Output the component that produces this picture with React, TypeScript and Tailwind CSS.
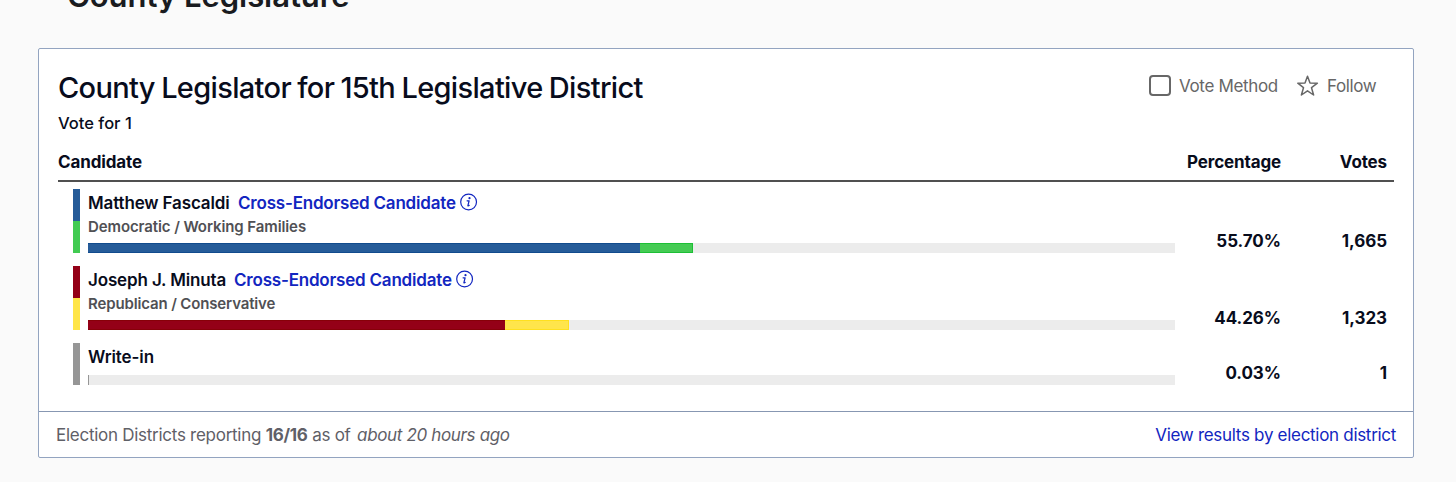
import React from 'react';
import { clsx } from 'clsx';

type Segment = { className: string; width: number };

type Candidate = {
  name: string;
  nameClass: string;
  parties?: string;
  partiesClass?: string;
  percentage: string;
  votes: string;
  stripes: string[];
  segments: Segment[];
};

// segment widths are percentages of the full bar
const candidates: Candidate[] = [
  {
    name: 'Matthew Fascaldi',
    nameClass: 'w-[141px] tracking-[-0.14px]',
    parties: 'Democratic / Working Families',
    partiesClass: 'tracking-[-0.1px]',
    percentage: '55.70%',
    votes: '1,665',
    stripes: ['bg-[#265c99]', 'bg-[#41cb52]'],
    segments: [
      { className: 'bg-[#265c99] border-y border-[#114b8d]', width: 50.78 },
      { className: 'bg-[#45cb54] border border-l-0 border-[#1dbf36]', width: 4.92 },
    ],
  },
  {
    name: 'Joseph J. Minuta',
    nameClass: 'w-[137px] tracking-[-0.14px]',
    parties: 'Republican / Conservative',
    partiesClass: 'tracking-[-0.14px]',
    percentage: '44.26%',
    votes: '1,323',
    stripes: ['bg-[#940017]', 'bg-[#ffe548]'],
    segments: [
      { className: 'bg-[#940017] border-y border-[#870008]', width: 38.32 },
      { className: 'bg-[#ffe54b] border border-l-0 border-[#ffe01f]', width: 5.94 },
    ],
  },
  {
    name: 'Write-in',
    nameClass: 'tracking-[-0.1px]',
    percentage: '0.03%',
    votes: '1',
    stripes: ['bg-[#969696]'],
    segments: [{ className: 'bg-[#969696]', width: 0.07 }],
  },
];

const InfoIcon: React.FC = () => (
  <svg width="18" height="18" viewBox="0 0 18 18" fill="none" className="shrink-0 -mt-px">
    <circle cx="8.6" cy="9" r="7.9" stroke="#1226c0" strokeWidth="1.2" />
    <circle cx="9.5" cy="5.2" r="1.1" fill="#1226c0" />
    <path d="M7.1 7.8h2L7.9 12.6c-.1.5.5.5 1.3-.2" stroke="#1226c0" strokeWidth="1.25" strokeLinecap="round" strokeLinejoin="round" />
  </svg>
);

const StarIcon: React.FC = () => (
  <svg width="22" height="22" viewBox="0 0 22 22" fill="none" className="shrink-0">
    <path
      d="M10.5 1.2L13 8L20.4 8.2L14.5 12.7L16.6 20L10.5 15.8L4.4 20L6.5 12.7L0.8 8.2L8 8Z"
      stroke="#676767"
      strokeWidth="1.5"
      strokeLinejoin="round"
    />
  </svg>
);

const CandidateRow: React.FC<{ candidate: Candidate }> = ({ candidate }) => (
  <div className={clsx('flex', candidate.parties ? 'h-16' : 'h-[42px]')}>
    {/* Party stripe */}
    <div className="ml-[15px] w-[7px] flex flex-col shrink-0">
      {candidate.stripes.map(color => (
        <div key={color} className={clsx('flex-1', color)} />
      ))}
    </div>
    <div className="ml-2 w-[1087px] flex flex-col shrink-0">
      <div className="flex items-center h-[26px] pt-px text-[17px] leading-[24px] font-semibold whitespace-nowrap">
        <span className={candidate.nameClass}>{candidate.name}</span>
        {candidate.parties && (
          <a href="#" className="ml-[9px] flex items-center gap-1 text-[#1226c0]">
            <span className="w-[218px] tracking-[-0.2px]">Cross-Endorsed Candidate</span>
            <InfoIcon />
          </a>
        )}
      </div>
      {candidate.parties && (
        <div className={clsx('h-6 leading-[24px] text-[15px] font-semibold text-[#505054] whitespace-nowrap', candidate.partiesClass)}>
          {candidate.parties}
        </div>
      )}
      <div className="mt-auto flex h-[10px] bg-[#ececec]">
        {candidate.segments.map(s => (
          <div key={s.className} className={s.className} style={{ width: `${s.width}%` }} />
        ))}
      </div>
    </div>
    <div className="w-[106px] self-end text-right text-[17px] leading-6 font-bold tracking-[-0.05px]">{candidate.percentage}</div>
    <div className="w-[106px] self-end text-right text-[17px] leading-6 font-bold tracking-[-0.05px]">{candidate.votes}</div>
  </div>
);

const App: React.FC = () => {
  return (
    <div className="h-[482px] overflow-hidden bg-[#fafafa] px-[38px] font-['Inter','Liberation_Sans',sans-serif] text-[#080c1c]">
      <div className="h-12">
        <h1 className="ml-[29px] -mt-[24px] h-12 leading-[40px] text-[31px] font-semibold tracking-[-0.05px] text-[#191b20]">County Legislature</h1>
      </div>
      <div className="mt-6 h-[410px] w-[1376px] flex flex-col rounded-[2px] border border-[#93a4c0] bg-white">
        <div className="flex-1 px-[19px]">
          <div className="flex justify-between pt-[19px]">
            <h2 className="h-10 leading-[40px] text-[29px] font-medium tracking-[-0.66px] [word-spacing:-0.8px]">County Legislator for 15th Legislative District</h2>
            <div className="flex items-center h-9 mr-[18px] text-[17px] text-[#676767]">
              <span className="w-[22px] h-[21px] -mt-px rounded-[4px] border-2 border-[#676767]" />
              <span className="ml-2 mt-[2px] w-[99px] tracking-[-0.35px] whitespace-nowrap">Vote Method</span>
              <span className="ml-[19px]"><StarIcon /></span>
              <span className="ml-2 mt-[2px] w-[49px] tracking-[-0.4px]">Follow</span>
            </div>
          </div>
          <div className="mt-[3px] h-6 leading-6 text-[16.5px] font-medium">Vote for 1</div>
          {/* Table header */}
          <div className="mt-[14px] flex h-[33px] border-b-2 border-[#505050] text-[17px] leading-[26px] font-bold tracking-[-0.13px]">
            <div className="w-[1117px]">Candidate</div>
            <div className="w-[106px] text-right">Percentage</div>
            <div className="w-[106px] text-right">Votes</div>
          </div>
          <div className="mt-[7px] flex flex-col gap-[13px]">
            {candidates.map(c => (
              <CandidateRow key={c.name} candidate={c} />
            ))}
          </div>
        </div>
        <div className="flex items-center justify-between h-[46px] pt-[2px] border-t border-[#8797b2] px-[17px] text-[17px]">
          <p className="text-[#5f6067] tracking-[-0.27px]">
            Election Districts reporting <b>16/16</b> as of{' '}
            <i className="ml-[2px] tracking-[-0.35px]">about 20 hours ago</i>
          </p>
          <a href="#" className="text-[#1226c0] tracking-[-0.3px]">View results by election district</a>
        </div>
      </div>
    </div>
  );
};

export default App;
